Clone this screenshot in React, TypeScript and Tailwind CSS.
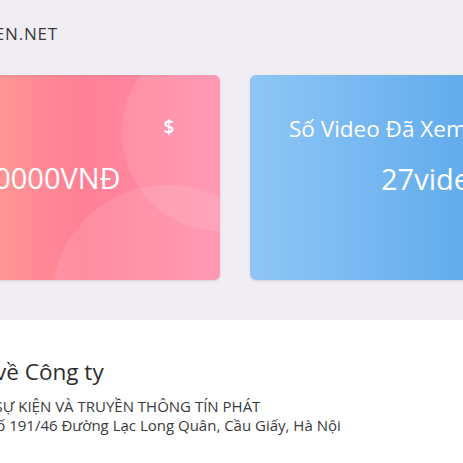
export default function App() {
  return (
    <div
      className="h-[463px] w-[463px] overflow-hidden bg-[#f1eef3] text-[#333]"
      style={{ fontFamily: '"Open Sans", "Noto Sans", sans-serif' }}
    >
      <div className="-ml-[60px] w-[700px]">
        <div className="flex h-[75px] justify-start pt-[22px]">
          <p className="-ml-[71px] text-[17px] leading-6 tracking-[0.8px] text-[#3b3b3b]">TAIKHOAN.VIDEN.NET</p>
        </div>

        <div className="flex gap-[30px]">
          <div className="relative h-[205px] w-[280px] overflow-hidden rounded-md bg-gradient-to-r from-[#ffa393] via-[#ff8096] to-[#ff8fab] text-white shadow-sm">
            <div className="absolute left-[182px] top-[-40px] h-[196px] w-[196px] rounded-full bg-white/10" />
            <div className="absolute left-[112px] top-[110px] h-[230px] w-[230px] rounded-full bg-white/10" />
            <div className="relative flex flex-col items-center pl-[178px] pt-[40px]">
              <span className="text-[19px] font-semibold leading-6">$</span>
            </div>
            <p className="relative mt-[21px] pl-[21px] text-[29px] leading-9">100000VNĐ</p>
          </div>

          <div className="relative h-[205px] w-[360px] overflow-hidden rounded-md bg-gradient-to-r from-[#8fc6f6] to-[#3f9ae6] text-white shadow-sm">
            <div className="absolute left-[209px] top-[175px] h-[200px] w-[200px] rounded-full bg-white/10" />
            <p className="relative pl-[39px] pt-[40px] text-[22.5px] leading-7">Số Video Đã Xem Trong Tháng</p>
            <p className="relative mt-[18px] pl-[131px] text-[29px] leading-9">27video</p>
          </div>
        </div>
      </div>

      <div className="mt-[40px] h-[200px] bg-white pt-[38px]">
        <div className="-ml-[48px]">
          <h2 className="-ml-[64px] text-[22.5px] leading-7 text-[#2d2d2d]">Giới thiệu về Công ty</h2>
          <div className="mt-[11px] text-[15px] leading-[19px] text-[#3a3a3a]">
            <p className="-ml-[95px]">CÔNG TY CỔ PHẦN SỰ KIỆN VÀ TRUYỀN THÔNG TÍN PHÁT</p>
            <p className="ml-[36px]">Số 191/46 Đường Lạc Long Quân, Cầu Giấy, Hà Nội</p>
          </div>
        </div>
      </div>
    </div>
  );
}
